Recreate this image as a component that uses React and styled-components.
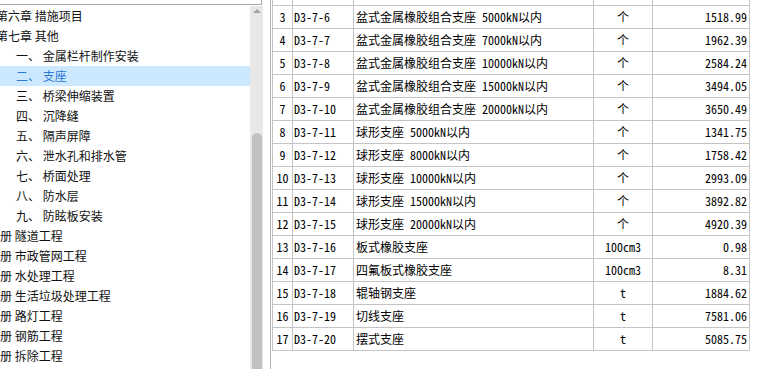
import React from "react";
import styled, { createGlobalStyle } from "styled-components";

const tree = [
    { level: 1, text: "第六章 措施项目" },
    { level: 1, text: "第七章 其他" },
    { level: 2, text: "一、 金属栏杆制作安装" },
    { level: 2, text: "二、 支座", selected: true },
    { level: 2, text: "三、 桥梁伸缩装置" },
    { level: 2, text: "四、 沉降缝" },
    { level: 2, text: "五、 隔声屏障" },
    { level: 2, text: "六、 泄水孔和排水管" },
    { level: 2, text: "七、 桥面处理" },
    { level: 2, text: "八、 防水层" },
    { level: 2, text: "九、 防眩板安装" },
    { level: 0, text: "第四册 隧道工程" },
    { level: 0, text: "第五册 市政管网工程" },
    { level: 0, text: "第六册 水处理工程" },
    { level: 0, text: "第七册 生活垃圾处理工程" },
    { level: 0, text: "第八册 路灯工程" },
    { level: 0, text: "第九册 钢筋工程" },
    { level: 0, text: "第十册 拆除工程" },
];

const rows = [
    [3, "D3-7-6", "盆式金属橡胶组合支座 5000kN以内", "个", "1518.99"],
    [4, "D3-7-7", "盆式金属橡胶组合支座 7000kN以内", "个", "1962.39"],
    [5, "D3-7-8", "盆式金属橡胶组合支座 10000kN以内", "个", "2584.24"],
    [6, "D3-7-9", "盆式金属橡胶组合支座 15000kN以内", "个", "3494.05"],
    [7, "D3-7-10", "盆式金属橡胶组合支座 20000kN以内", "个", "3650.49"],
    [8, "D3-7-11", "球形支座 5000kN以内", "个", "1341.75"],
    [9, "D3-7-12", "球形支座 8000kN以内", "个", "1758.42"],
    [10, "D3-7-13", "球形支座 10000kN以内", "个", "2993.09"],
    [11, "D3-7-14", "球形支座 15000kN以内", "个", "3892.82"],
    [12, "D3-7-15", "球形支座 20000kN以内", "个", "4920.39"],
    [13, "D3-7-16", "板式橡胶支座", "100cm3", "0.98"],
    [14, "D3-7-17", "四氟板式橡胶支座", "100cm3", "8.31"],
    [15, "D3-7-18", "辊轴钢支座", "t", "1884.62"],
    [16, "D3-7-19", "切线支座", "t", "7581.06"],
    [17, "D3-7-20", "摆式支座", "t", "5085.75"],
];

const App = () => {
    return (
        <>
            <GlobalStyle />
            <Page>
                <LeftPane>
                    <TopBox />
                    <TreeWrap>
                        <TreeList>
                            {tree.map((item, i) => (
                                <TreeRow key={i} $level={item.level} $selected={item.selected}>
                                    {item.text}
                                </TreeRow>
                            ))}
                        </TreeList>
                        <ScrollTrack>
                            <UpArrow />
                            <Thumb />
                        </ScrollTrack>
                    </TreeWrap>
                </LeftPane>
                <RightPane>
                    <Grid>
                        {/* row 2, mostly scrolled out of view */}
                        <Row>
                            <Cell />
                            <Cell />
                            <Cell />
                            <Cell />
                            <Cell />
                        </Row>
                        {rows.map((r) => (
                            <Row key={r[0]}>
                                <Cell $align="center">{r[0]}</Cell>
                                <Cell $pad="0 0 0 1px">{r[1]}</Cell>
                                <Cell $pad="0 0 0 2px">{r[2]}</Cell>
                                <Cell $align="center">{r[3]}</Cell>
                                <Cell $align="right" $pad="0 2px 0 0">{r[4]}</Cell>
                            </Row>
                        ))}
                    </Grid>
                </RightPane>
            </Page>
        </>
    );
};

export default App;

const GlobalStyle = createGlobalStyle`
    html, body {
        margin: 0;
        padding: 0;
        background: #fff;
        overflow: hidden;
    }
`;

const Page = styled.div`
    display: flex;
    width: 779px;
    height: 369px;
    overflow: hidden;
    background: #fff;
`;

const LeftPane = styled.div`
    width: 263px;
    flex-shrink: 0;
    display: flex;
    flex-direction: column;
`;

const TopBox = styled.div`
    height: 5px;
    width: 262px;
    box-sizing: border-box;
    border-bottom: 1px solid #a9a9a9;
    border-right: 1px solid #a9a9a9;
`;

const TreeWrap = styled.div`
    flex: 1;
    display: flex;
    padding-top: 1px;
    overflow: hidden;
`;

const TreeList = styled.div`
    width: 250px;
    overflow: hidden;
    font-family: "Noto Sans CJK SC", "Noto Sans", sans-serif;
    font-size: 12px;
    color: #111;
`;

const TreeRow = styled.div`
    height: 20px;
    line-height: 20px;
    white-space: nowrap;
    text-indent: ${({ $level }) => $level * 20 - 24}px;
    background: ${({ $selected }) => ($selected ? "#cce8ff" : "transparent")};
    color: ${({ $selected }) => ($selected ? "#2b79d8" : "#111")};
`;

const ScrollTrack = styled.div`
    width: 13px;
    background: #e8e8e8;
    display: flex;
    flex-direction: column;
    align-items: center;
`;

const UpArrow = styled.div`
    margin-top: 3px;
    width: 0;
    height: 0;
    border-left: 4px solid transparent;
    border-right: 4px solid transparent;
    border-bottom: 4px solid #a3a3a3;
`;

const Thumb = styled.div`
    margin-top: 120px;
    width: 10px;
    flex: 1;
    background: #c1c1c1;
    border-radius: 5px 5px 0 0;
`;

const RightPane = styled.div`
    margin-left: 7px;
    flex: 1;
    border-left: 1px solid #b4b4b4;
    padding-left: 1px;
    overflow: hidden;
`;

const Grid = styled.div`
    margin-top: -17px;
    width: 478px;
    border-left: 1px solid #c4c4c4;
    font-family: "Noto Sans Mono CJK SC", "Noto Sans CJK SC", monospace;
    font-size: 12px;
    color: #000;
`;

const Row = styled.div`
    display: grid;
    grid-template-columns: 20px 61px 240px 59px 97px;
    height: 23px;
`;

const Cell = styled.div`
    box-sizing: border-box;
    border-right: 1px solid #c4c4c4;
    border-bottom: 1px solid #c4c4c4;
    line-height: 22px;
    white-space: nowrap;
    overflow: hidden;
    text-align: ${({ $align }) => $align || "left"};
    padding: ${({ $pad }) => $pad || "0"};
`;
